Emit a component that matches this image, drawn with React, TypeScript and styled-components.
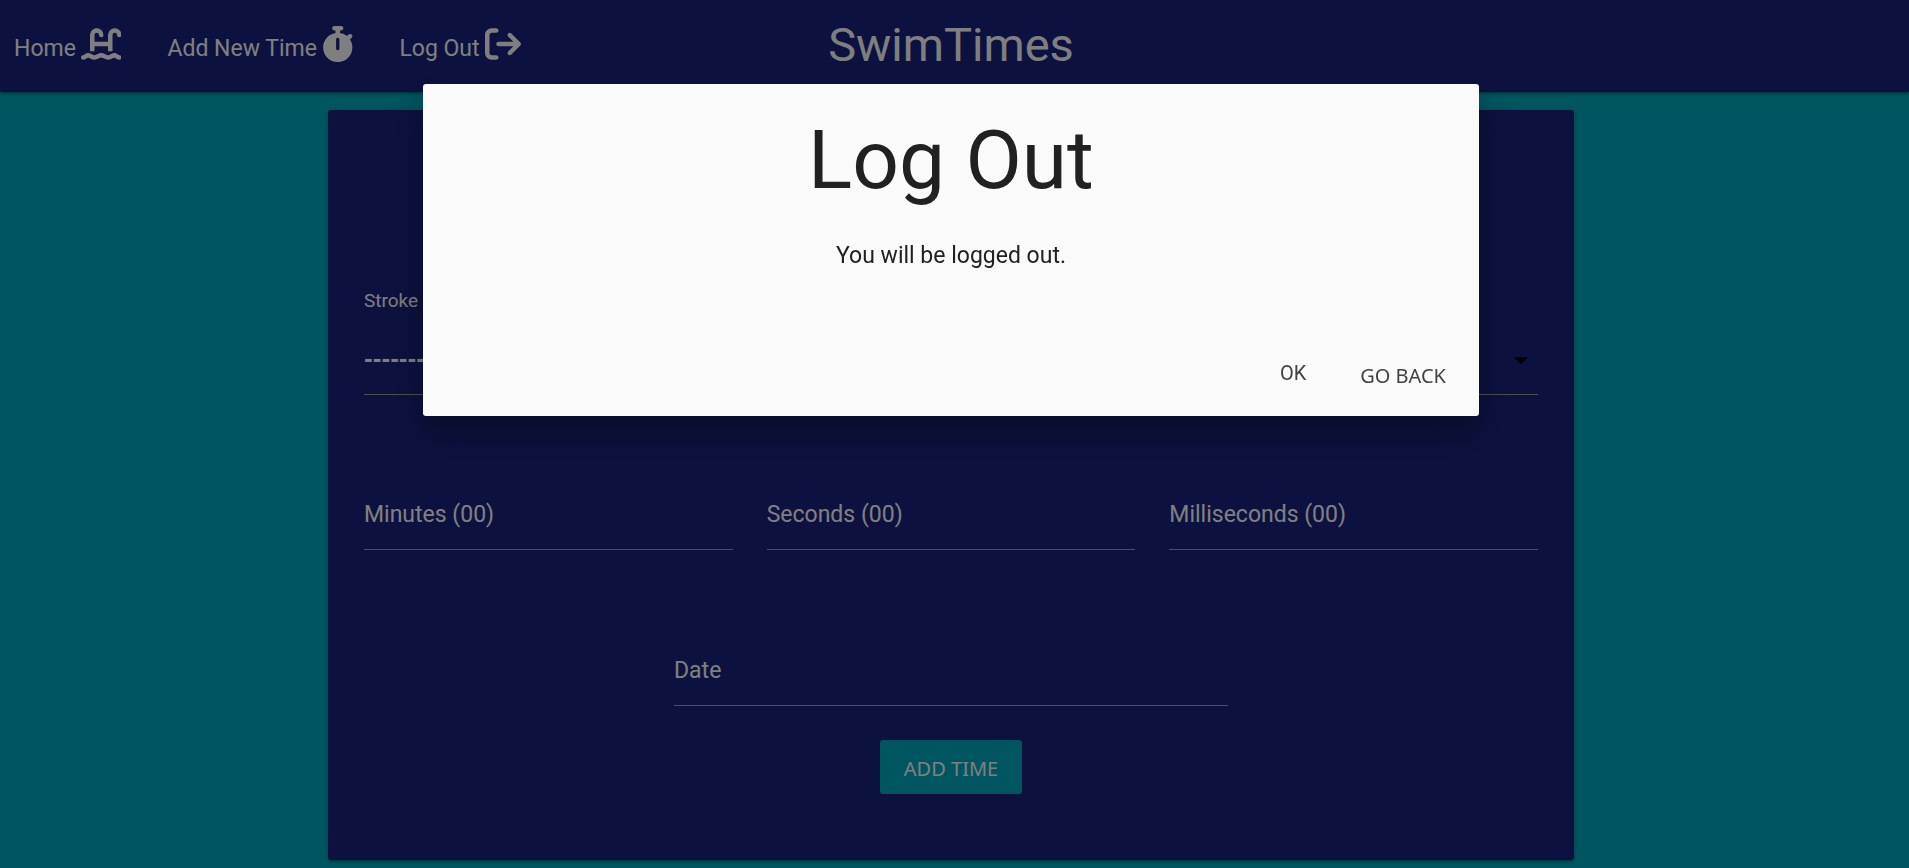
import React from 'react';
import styled, { createGlobalStyle } from 'styled-components';

const display = '"Roboto", "Liberation Sans", sans-serif';
const buttonFont = '"Noto Sans", "Open Sans", sans-serif';

const GlobalStyle = createGlobalStyle`
  *, *::before, *::after { box-sizing: border-box; }
  body {
    margin: 0;
    background: #00acc1;
    color: #fff;
    font-family: ${display};
    font-size: 23px;
  }
`;

const Page = styled.div`
  min-height: 100vh;
  padding-bottom: 8px;
`;

const Header = styled.header`
  position: relative;
  height: 92px;
  padding: 0 14px;
  background: #1a237e;
  box-shadow: 0 2px 2px 0 rgba(0, 0, 0, 0.14), 0 3px 1px -2px rgba(0, 0, 0, 0.12),
    0 1px 5px 0 rgba(0, 0, 0, 0.2);
`;

const NavList = styled.nav`
  display: flex;
  align-items: flex-end;
  gap: 46px;
  height: 62px;
`;

const NavLink = styled.a`
  display: flex;
  align-items: flex-end;
  gap: 5px;
  color: #fff;
  line-height: 26px;
  text-decoration: none;
`;

const Icon = styled.svg`
  display: block;
  flex: none;
  width: auto;
  height: 36px;
`;

const Brand = styled.a`
  position: absolute;
  top: 0;
  left: 0;
  right: 7px;
  width: max-content;
  margin: 0 auto;
  color: #fff;
  font-size: 47px;
  line-height: 90px;
  text-decoration: none;
`;

const Main = styled.main`
  display: flex;
  justify-content: center;
  padding: 18px 24px 0 17px;
`;

const Card = styled.form`
  width: 100%;
  max-width: 1246px;
  padding: 179px 36px 66px;
  border-radius: 3px;
  background: #1a237e;
  box-shadow: 0 2px 2px 0 rgba(0, 0, 0, 0.14), 0 3px 1px -2px rgba(0, 0, 0, 0.12),
    0 1px 5px 0 rgba(0, 0, 0, 0.2);
`;

const SelectLabel = styled.label`
  display: block;
  margin-bottom: 12px;
  font-size: 19px;
  line-height: 24px;
`;

const Stack = styled.div`
  display: grid;
  align-items: center;

  > * {
    grid-area: 1 / 1;
  }
`;

const Select = styled.select`
  appearance: none;
  width: 100%;
  height: 70px;
  padding: 0;
  border: 0;
  border-bottom: 1px solid #9e9e9e;
  border-radius: 0;
  background: transparent;
  color: #fff;
  font-family: "DejaVu Sans", sans-serif;
  font-size: 21px;
  font-weight: 700;
`;

const Caret = styled.svg`
  justify-self: end;
  width: 34px;
  height: 34px;
  pointer-events: none;
`;

const TimeRow = styled.div`
  display: grid;
  grid-template-columns: repeat(3, 1fr);
  gap: 34px;
  margin-top: 85px;
`;

const DateRow = styled.div`
  width: 100%;
  max-width: 554px;
  margin: 86px auto 34px;
`;

const FieldLabel = styled.label`
  padding-bottom: 1px;
  pointer-events: none;
`;

const Input = styled.input`
  width: 100%;
  height: 70px;
  padding: 0;
  border: 0;
  border-bottom: 1px solid #9e9e9e;
  background: transparent;
  color: #fff;
  font: inherit;
`;

const SubmitButton = styled.button`
  display: block;
  height: 54px;
  margin: 0 auto;
  padding: 2px 24px 0;
  border: 0;
  border-radius: 3px;
  background: #00acc1;
  color: #fff;
  font-family: ${buttonFont};
  font-size: 20px;
`;

const Overlay = styled.div`
  position: fixed;
  inset: 0;
  background: rgba(0, 0, 0, 0.5);
`;

const Modal = styled.section`
  position: fixed;
  top: 84px;
  left: 0;
  right: 7px;
  width: 90%;
  max-width: 1056px;
  margin: 0 auto;
  border-radius: 3px;
  background: #fafafa;
  color: #212121;
  text-align: center;
  box-shadow: 0 24px 38px 3px rgba(0, 0, 0, 0.14), 0 9px 46px 8px rgba(0, 0, 0, 0.12),
    0 11px 15px -7px rgba(0, 0, 0, 0.2);
`;

const ModalTitle = styled.h1`
  margin: 0;
  padding-top: 32px;
  font-size: 82px;
  font-weight: 400;
  line-height: 88px;
`;

const ModalText = styled.p`
  margin: 34px 0 0;
  line-height: 36px;
`;

const ModalFooter = styled.footer`
  display: flex;
  justify-content: flex-end;
  align-items: flex-end;
  gap: 54px;
  padding: 84px 33px 25px 0;
`;

const OkButton = styled.button`
  padding: 0 0 3px;
  border: 0;
  background: transparent;
  color: #424242;
  font-family: ${display};
  font-size: 20px;
  line-height: 30px;
`;

const BackButton = styled(OkButton)`
  padding: 0;
  font-family: ${buttonFont};
`;

const PoolIcon = () => (
  <Icon viewBox="0 0 576 512" fill="none" stroke="currentColor" strokeWidth="64" aria-hidden="true">
    <path d="M160 360V128a64 64 0 0 1 64-64" />
    <path d="M416 360V128a64 64 0 0 1 64-64" />
    <path d="M224 64a64 64 0 0 1 64 64M480 64a64 64 0 0 1 64 64" strokeLinecap="round" />
    <path d="M160 256H416" />
    <path
      d="M32 448C64 443 80 416 100 416C128 416 156 448 192 448C228 448 256 416 288 416C320 416 348 448 384 448C420 448 448 416 476 416C496 416 512 443 544 448"
      strokeLinecap="round"
      strokeLinejoin="round"
    />
  </Icon>
);

const StopwatchIcon = () => (
  <Icon viewBox="0 0 448 512" fill="currentColor" aria-hidden="true">
    <path d="M272 0C289.7 0 304 14.33 304 32C304 49.67 289.7 64 272 64H256V98.45C293.5 104.2 327.7 120 355.7 143L377.4 121.4C389.9 108.9 410.1 108.9 422.6 121.4C435.1 133.9 435.1 154.1 422.6 166.6L398.5 190.8C419.7 223.3 432 262.2 432 304C432 418.9 338.9 512 224 512C109.1 512 16 418.9 16 304C16 200 92.32 113.8 192 98.45V64H176C158.3 64 144 49.67 144 32C144 14.33 158.3 0 176 0H272zM248 192C248 178.7 237.3 168 224 168C210.7 168 200 178.7 200 192V320C200 333.3 210.7 344 224 344C237.3 344 248 333.3 248 320V192z" />
  </Icon>
);

const ExitIcon = () => (
  <Icon viewBox="0 0 512 512" fill="currentColor" aria-hidden="true">
    <path d="M160 416H96c-17.67 0-32-14.33-32-32V128c0-17.67 14.33-32 32-32h64c17.67 0 32-14.33 32-32S177.7 32 160 32H96C42.98 32 0 74.98 0 128v256c0 53.02 42.98 96 96 96h64c17.67 0 32-14.33 32-32S177.7 416 160 416zM502.6 233.4l-128-128c-12.51-12.51-32.76-12.49-45.25 0c-12.5 12.5-12.5 32.75 0 45.25L402.8 224H192C174.3 224 160 238.3 160 256s14.31 32 32 32h210.8l-73.38 73.38c-12.5 12.5-12.5 32.75 0 45.25s32.75 12.5 45.25 0l128-128C515.1 266.1 515.1 245.9 502.6 233.4z" />
  </Icon>
);

type FieldProps = { id: string; label: string };

const Field = ({ id, label }: FieldProps) => (
  <Stack>
    <Input id={id} name={id} type="text" />
    <FieldLabel htmlFor={id}>{label}</FieldLabel>
  </Stack>
);

export default function App() {
  return (
    <>
      <GlobalStyle />
      <Page>
        <Header>
          <NavList>
            <NavLink href="#home">Home <PoolIcon /></NavLink>
            <NavLink href="#add">Add New Time <StopwatchIcon /></NavLink>
            <NavLink href="#logout">Log Out <ExitIcon /></NavLink>
          </NavList>
          <Brand href="#home">SwimTimes</Brand>
        </Header>
        <Main>
          <Card>
            <SelectLabel htmlFor="stroke">Stroke</SelectLabel>
            <Stack>
              <Select id="stroke" name="stroke">
                <option value="">---------</option>
              </Select>
              <Caret viewBox="0 0 24 24" aria-hidden="true">
                <path d="M7 10l5 5 5-5z" />
              </Caret>
            </Stack>
            <TimeRow>
              <Field id="minutes" label="Minutes (00)" />
              <Field id="seconds" label="Seconds (00)" />
              <Field id="milliseconds" label="Milliseconds (00)" />
            </TimeRow>
            <DateRow>
              <Field id="date" label="Date" />
            </DateRow>
            <SubmitButton type="button">ADD TIME</SubmitButton>
          </Card>
        </Main>
      </Page>
      <Overlay />
      <Modal role="dialog" aria-modal="true" aria-labelledby="logout-title">
        <ModalTitle id="logout-title">Log Out</ModalTitle>
        <ModalText>You will be logged out.</ModalText>
        <ModalFooter>
          <OkButton type="button">OK</OkButton>
          <BackButton type="button">GO BACK</BackButton>
        </ModalFooter>
      </Modal>
    </>
  );
}
